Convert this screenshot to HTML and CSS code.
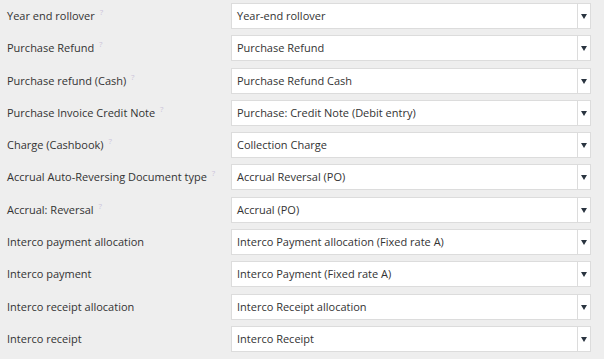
FILE: index.html
```html
<!DOCTYPE html>
<html lang="en">
<head>
    <meta charset="UTF-8">
    <title>Document type settings</title>
    <link rel="stylesheet" href="styles.css">
</head>
<body>

    <div class="form">
        <div class="row">
            <label class="label">Year end rollover <span class="hint">?</span></label>
            <div class="select"><span class="value">Year-end rollover</span><span class="arrow"></span></div>
        </div>
        <div class="row">
            <label class="label">Purchase Refund <span class="hint">?</span></label>
            <div class="select"><span class="value">Purchase Refund</span><span class="arrow"></span></div>
        </div>
        <div class="row">
            <label class="label">Purchase refund (Cash) <span class="hint">?</span></label>
            <div class="select"><span class="value">Purchase Refund Cash</span><span class="arrow"></span></div>
        </div>
        <div class="row">
            <label class="label">Purchase Invoice Credit Note <span class="hint">?</span></label>
            <div class="select"><span class="value">Purchase: Credit Note (Debit entry)</span><span class="arrow"></span></div>
        </div>
        <div class="row">
            <label class="label">Charge (Cashbook) <span class="hint">?</span></label>
            <div class="select"><span class="value">Collection Charge</span><span class="arrow"></span></div>
        </div>
        <div class="row">
            <label class="label">Accrual Auto-Reversing Document type <span class="hint">?</span></label>
            <div class="select"><span class="value">Accrual Reversal (PO)</span><span class="arrow"></span></div>
        </div>
        <div class="row">
            <label class="label">Accrual: Reversal <span class="hint">?</span></label>
            <div class="select"><span class="value">Accrual (PO)</span><span class="arrow"></span></div>
        </div>
        <div class="row">
            <label class="label">Interco payment allocation</label>
            <div class="select"><span class="value">Interco Payment allocation (Fixed rate A)</span><span class="arrow"></span></div>
        </div>
        <div class="row">
            <label class="label">Interco payment</label>
            <div class="select"><span class="value">Interco Payment (Fixed rate A)</span><span class="arrow"></span></div>
        </div>
        <div class="row">
            <label class="label">Interco receipt allocation</label>
            <div class="select"><span class="value">Interco Receipt allocation</span><span class="arrow"></span></div>
        </div>
        <div class="row">
            <label class="label">Interco receipt</label>
            <div class="select"><span class="value">Interco Receipt</span><span class="arrow"></span></div>
        </div>
    </div>

</body>
</html>
```

FILE: styles.css
```css
body {
    margin: 0;
    background-color: #eeeeee;
    font-family: "Open Sans", "Noto Sans", sans-serif;
    font-size: 11px;
    color: #333;
}

.form {
    padding-top: 3px;
}

.row {
    display: flex;
    align-items: flex-start;
    height: 32.3px;
}

.label {
    width: 224px;
    padding-left: 7px;
    height: 26px;
    line-height: 26px;
    white-space: nowrap;
}

.hint {
    font-size: 8px;
    line-height: 0;
    color: #cbc4da;
    vertical-align: 5px;
    margin-left: 2px;
}

.select {
    display: flex;
    width: 360px;
    height: 26px;
    box-sizing: border-box;
    background-color: #fff;
    border: 1px solid #dcdcdc;
}

.value {
    flex: 1;
    padding-left: 5px;
    line-height: 24px;
}

.arrow {
    width: 12px;
    border-left: 1px solid #dcdcdc;
    position: relative;
}

.arrow::after {
    content: "";
    position: absolute;
    left: 3px;
    top: 10px;
    border-left: 3px solid transparent;
    border-right: 3px solid transparent;
    border-top: 5px solid #2a3440;
}
```
